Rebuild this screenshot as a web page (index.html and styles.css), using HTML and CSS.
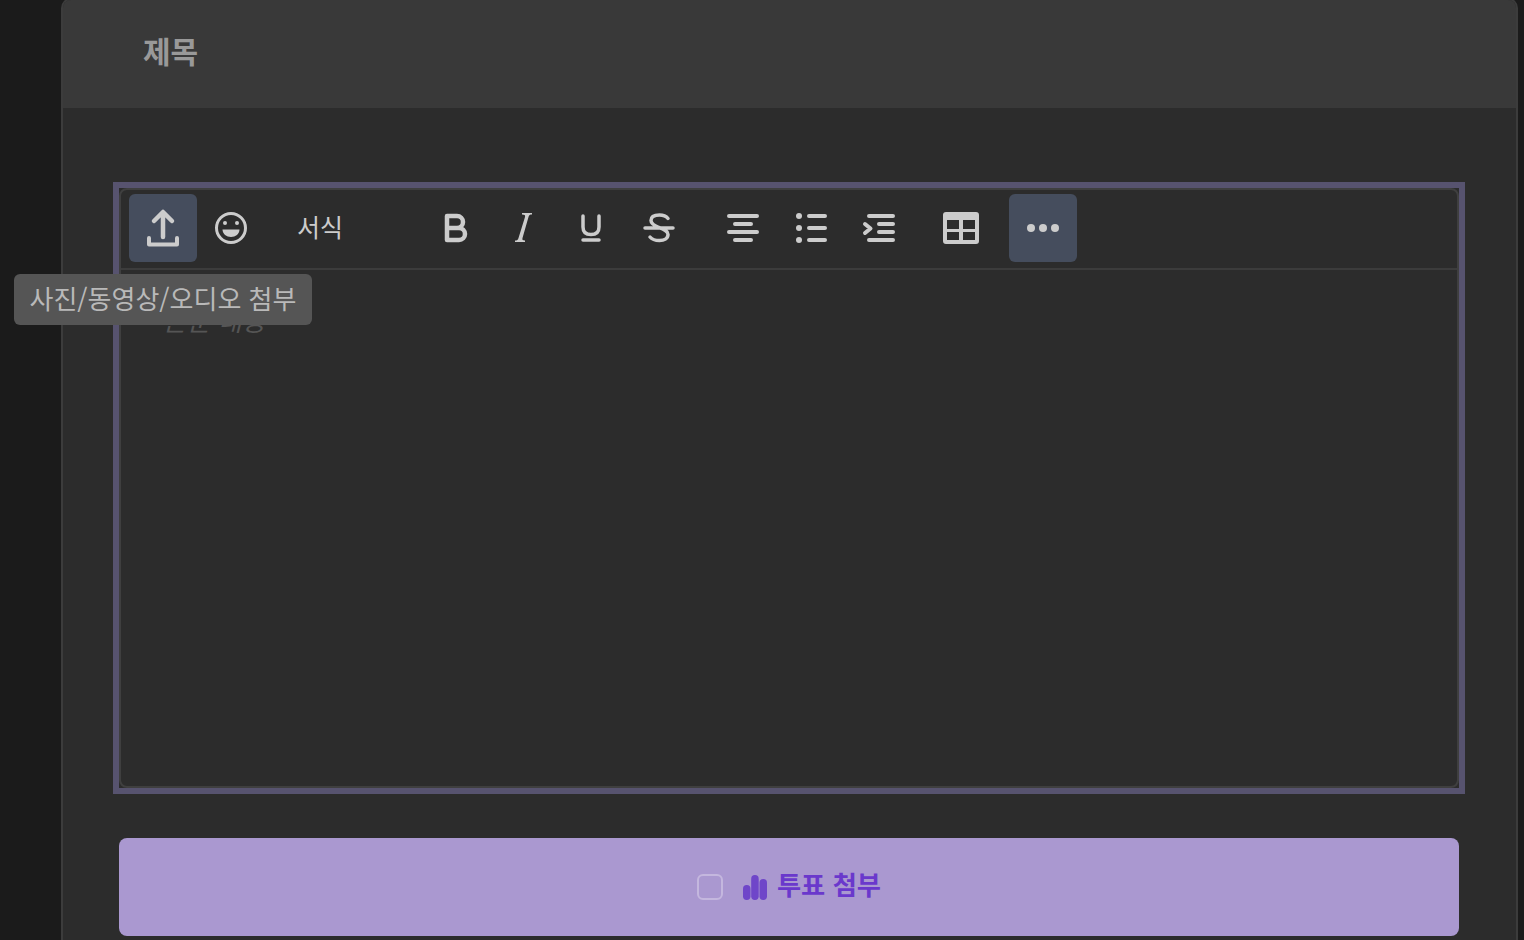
FILE: index.html
```html
<!DOCTYPE html>
<html lang="ko">
<head>
<meta charset="utf-8">
<title>글쓰기</title>
<link rel="stylesheet" href="styles.css">
</head>
<body>
<main class="card">
  <header class="card-head"><span class="title">제목</span></header>
  <section class="card-body">
    <div class="editor-focus">
      <div class="editor">
        <div class="toolbar">
          <button class="tb active" aria-label="upload">
            <svg viewBox="0 0 68 68"><path class="s45" d="M34 43V19M25 27l9-9 9 9"/><path class="s" d="M20 44v6.500h28V44"/></svg>
          </button>
          <button class="tb" aria-label="emoji">
            <svg viewBox="0 0 68 68"><circle class="s3" cx="34" cy="34" r="14.500"/><circle class="f" cx="28" cy="29" r="2"/><circle class="f" cx="40" cy="29" r="2"/><path class="f" d="M25.500 35.500h17c0 4.500-4 7.500-8.500 7.500s-8.500-3-8.500-7.500z"/></svg>
          </button>
          <button class="tb format">서식</button>
          <button class="tb" aria-label="bold">
            <svg viewBox="0 0 68 68"><path class="s45" d="M26 22h10a6 6 0 0 1 0 12H26zM26 34h12a6 6 0 0 1 0 12H26z"/></svg>
          </button>
          <button class="tb" aria-label="italic">
            <svg viewBox="0 0 68 68"><path class="f" d="M33 19h10v1.500c-2 0-3 .6-3.500 2.500L33.500 44c-.5 1.800.3 2.500 2.500 2.500V48H26v-1.500c2 0 3-.6 3.500-2.500L36 23c.5-1.800-.5-2.500-3-2.500z"/></svg>
          </button>
          <button class="tb" aria-label="underline">
            <svg viewBox="0 0 68 68"><path class="s35" d="M26 22v11c0 5 3 7.500 8 7.500s8-2.500 8-7.500V22"/><path class="s35" d="M26 46h16"/></svg>
          </button>
          <button class="tb" aria-label="strikethrough">
            <svg viewBox="0 0 68 68"><path class="s35" d="M20 34h28M43 24.500c-2-2.500-5-3.500-8.500-3.500-4.500 0-8.500 1.500-8.500 5.500 0 3 3 5 8 7 6 2 9 3.500 9 7 0 4-4 6-8.500 6-4 0-7.500-1-9.500-3.500"/></svg>
          </button>
          <button class="tb gap-a" aria-label="align center">
            <svg viewBox="0 0 68 68"><path class="s" d="M20 22h28M26 30h16M20 38h28M26 46h16"/></svg>
          </button>
          <button class="tb" aria-label="list">
            <svg viewBox="0 0 68 68"><circle class="f" cx="22" cy="22" r="3"/><circle class="f" cx="22" cy="34" r="3"/><circle class="f" cx="22" cy="46" r="3"/><path class="s" d="M32 22h16M32 34h16M32 46h16"/></svg>
          </button>
          <button class="tb" aria-label="indent">
            <svg viewBox="0 0 68 68"><path class="s" d="M24 22h24M34 30h14M34 38h14M24 46h24M20 30l5.500 4.500L20 39"/></svg>
          </button>
          <button class="tb gap-b" aria-label="table">
            <svg viewBox="0 0 68 68"><path class="f" fill-rule="evenodd" d="M19 18h30a3 3 0 0 1 3 3v26a3 3 0 0 1-3 3H19a3 3 0 0 1-3-3V21a3 3 0 0 1 3-3zM20 26v9h12v-9zM36 26v9h12v-9zM20 38v8h12v-8zM36 38v8h12v-8z"/></svg>
          </button>
          <button class="tb active gap-b" aria-label="more">
            <svg viewBox="0 0 68 68"><circle class="f" cx="22" cy="34" r="4"/><circle class="f" cx="34" cy="34" r="4"/><circle class="f" cx="46" cy="34" r="4"/></svg>
          </button>
        </div>
        <div class="content"><span class="placeholder">본문 내용</span></div>
      </div>
    </div>
    <button class="poll">
      <span class="check"></span>
      <svg class="poll-icon" viewBox="0 0 26 26"><rect x="1" y="11" width="7.500" height="15" rx="3.700"/><rect x="9.200" y="1" width="7.500" height="25" rx="3.700"/><rect x="17.500" y="5" width="7.500" height="21" rx="3.700"/></svg>
      <span class="poll-label">투표 첨부</span>
    </button>
  </section>
</main>
<div class="tooltip">사진/동영상/오디오 첨부</div>
</body>
</html>
```

FILE: styles.css
```css
* { box-sizing: border-box; }
html, body { margin: 0; height: 940px; overflow: hidden; }
body {
  background: #1b1b1b;
  font-family: "Noto Sans CJK KR", "Noto Sans", sans-serif;
  position: relative;
}
.card {
  width: 1457px;
  height: 942px;
  margin: -2px 0 0 61px;
  background: #2c2c2c;
  border: solid #3c3c3c;
  border-width: 2px 2px 0;
  border-radius: 10px 10px 0 0;
  overflow: hidden;
}
.card-head {
  height: 108px;
  background: #393939;
  padding: 0 0 8px 80px;
  display: flex;
  align-items: center;
}
.title { font-size: 30px; font-weight: 700; color: #999; }
.card-body { padding: 74px 51px 0 50px; }
.editor-focus {
  border: 6px solid #57536f;
  height: 612px;
}
.editor {
  height: 600px;
  border: 2px solid #3f3f3f;
  border-radius: 8px;
}
.toolbar {
  height: 80px;
  padding: 4px 8px 0;
  display: flex;
  align-items: flex-start;
  border-bottom: 2px solid #3c3c3c;
}
.tb {
  width: 68px;
  height: 68px;
  padding: 0;
  border: 0;
  border-radius: 6px;
  background: transparent;
  color: #ccc;
  font: 400 25px "Noto Sans CJK KR", sans-serif;
  flex: none;
}
.tb svg { display: block; width: 68px; height: 68px; }
.tb.active { background: #454d5d; }
.tb.format { width: 110px; margin-right: 46px; text-align: center; padding-bottom: 4px; }
.tb.gap-a { margin-left: 16px; }
.tb.gap-b { margin-left: 14px; }
.s, .s3, .s35, .s45 { fill: none; stroke: #ccc; stroke-linecap: round; stroke-linejoin: round; }
.s { stroke-width: 4; }
.s3 { stroke-width: 3; }
.s35 { stroke-width: 3.500; }
.s45 { stroke-width: 4.500; }
.f { fill: #ccc; }
.content { padding: 31px 42px; }
.placeholder { font-size: 26px; line-height: 38px; color: #555; display: block; font-style: italic; }
.poll {
  width: 1340px;
  height: 98px;
  margin: 44px 0 0 6px;
  border: 0;
  border-radius: 8px;
  background: #aa98d0;
  display: flex;
  align-items: center;
  justify-content: center;
  padding: 0 0 2px;
  font-family: inherit;
}
.check {
  width: 26px;
  height: 26px;
  border: 2px solid #c4b7de;
  border-radius: 6px;
  margin-right: 19px;
  position: relative;
  top: 1px;
}
.poll-icon { width: 26px; height: 26px; fill: #6f46c9; margin-right: 9px; position: relative; top: 1px; }
.poll-label { font-size: 26.300px; font-weight: 700; color: #6a38cc; line-height: 30px; position: relative; top: -2px; }
.tooltip {
  position: absolute;
  left: 14px;
  top: 274px;
  width: 298px;
  height: 51px;
  border-radius: 6px;
  background: #555;
  color: #b9b9b9;
  font-size: 26px;
  line-height: 48px;
  text-align: center;
  white-space: nowrap;
}
```
